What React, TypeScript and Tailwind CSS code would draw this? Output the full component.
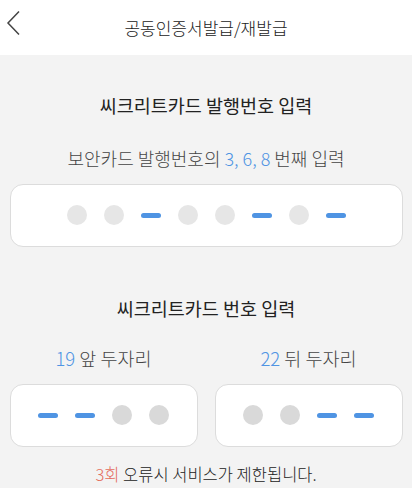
const font = { fontFamily: '"Noto Sans CJK KR", "Noto Sans", sans-serif' };

type Slot = "dot" | "dash";

function Dot({ kind, dotClass }: { kind: Slot; dotClass: string }) {
  return (
    <div className="flex h-5 w-5 items-center justify-center">
      {kind === "dot" ? (
        <span className={`h-5 w-5 rounded-full ${dotClass}`} />
      ) : (
        <span className="h-[5px] w-5 rounded-full bg-[#4f94e3]" />
      )}
    </div>
  );
}

function Box({ slots, dotClass, className }: { slots: Slot[]; dotClass: string; className?: string }) {
  return (
    <div
      className={`flex h-[63px] items-center justify-center gap-[17px] rounded-[13px] border border-[#dcdcdc] bg-white ${className ?? ""}`}
    >
      {slots.map((s, i) => (
        <Dot key={i} kind={s} dotClass={dotClass} />
      ))}
    </div>
  );
}

export default function App() {
  return (
    <div className="h-[488px] w-[412px] overflow-hidden bg-[#f3f3f3] text-[#333]" style={font}>
      <header className="relative flex h-[55px] items-center justify-center bg-white">
        <svg className="absolute left-[6px] top-[10px]" width="16" height="26" viewBox="0 0 16 26" fill="none">
          <path d="M13 1.5 L2 13 L13 24.5" stroke="#444" strokeWidth="1.5" />
        </svg>
        <h1 className="text-[17px] font-light leading-none text-[#222]">공동인증서발급/재발급</h1>
      </header>

      <section className="flex flex-col items-center pt-[41px]">
        <h2 className="text-[18.5px] leading-none text-[#222]">씨크리트카드 발행번호 입력</h2>
        <p className="mt-[34px] text-[18px] font-light leading-none text-[#444]">
          보안카드 발행번호의 <span className="text-[#4f94e3]">3, 6, 8</span> 번째 입력
        </p>
        <Box
          className="mt-[17px] w-[393px]"
          dotClass="bg-[#e6e6e6]"
          slots={["dot", "dot", "dash", "dot", "dot", "dash", "dot", "dash"]}
        />
      </section>

      <section className="flex flex-col items-center pt-[52px]">
        <h2 className="text-[18.5px] leading-none text-[#222]">씨크리트카드 번호 입력</h2>
        <div className="mt-[32px] flex w-[393px] gap-[17px]">
          <div className="flex flex-1 flex-col items-center">
            <p className="text-[18.5px] font-light leading-none text-[#444]">
              <span className="text-[#4f94e3]">19</span> 앞 두자리
            </p>
            <Box className="mt-[16px] w-full" dotClass="bg-[#d9d9d9]" slots={["dash", "dash", "dot", "dot"]} />
          </div>
          <div className="flex flex-1 flex-col items-center">
            <p className="text-[18.5px] font-light leading-none text-[#444]">
              <span className="text-[#4f94e3]">22</span> 뒤 두자리
            </p>
            <Box className="mt-[16px] w-full" dotClass="bg-[#d9d9d9]" slots={["dot", "dot", "dash", "dash"]} />
          </div>
        </div>
        <p className="mt-[19px] text-[16.5px] font-light leading-none text-[#222]">
          <span className="text-[#e46c5c]">3회</span> 오류시 서비스가 제한됩니다.
        </p>
      </section>
    </div>
  );
}
